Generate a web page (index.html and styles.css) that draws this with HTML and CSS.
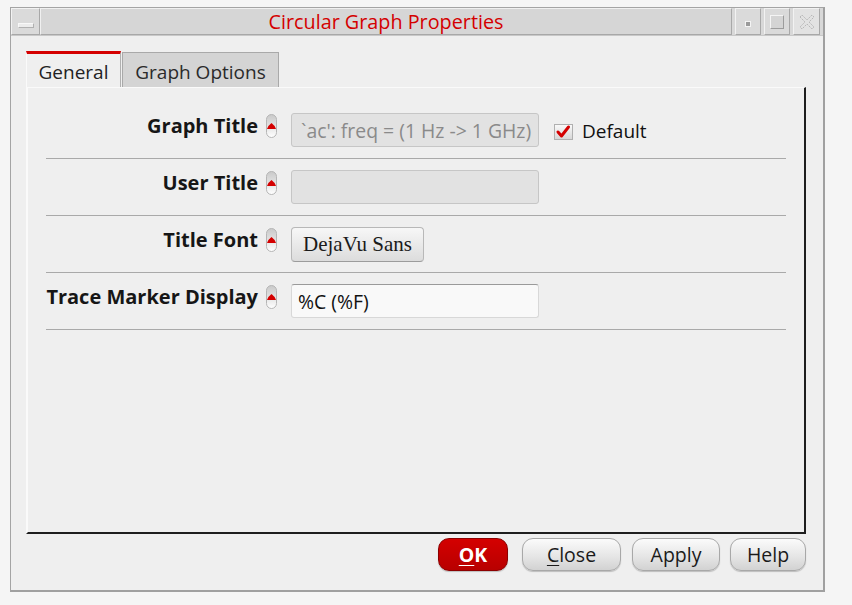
FILE: index.html
```html
<!DOCTYPE html>
<html>
<head>
<meta charset="utf-8">
<title>Circular Graph Properties</title>
<link rel="stylesheet" href="styles.css">
</head>
<body>
<div class="window">
  <div class="titlebar">
    <div class="tb-btn tb-menu"><span class="dash"></span></div>
    <div class="title">Circular Graph Properties</div>
    <div class="tb-btn tb-min"><span class="dot"></span></div>
    <div class="tb-btn tb-max"><span class="sq"></span></div>
    <div class="tb-btn tb-close">
      <svg width="18" height="18" viewBox="0 0 18 18"><path d="M2 4 L4 2 L9 7 L14 2 L16 4 L11 9 L16 14 L14 16 L9 11 L4 16 L2 14 L7 9 Z" fill="none" stroke="#b8b8b8" stroke-width="1" stroke-dasharray="2 1"/></svg>
    </div>
  </div>
  <div class="client">
    <div class="tabs">
      <div class="tab active">General</div>
      <div class="tab">Graph Options</div>
    </div>
    <div class="panel">
      <div class="row">
        <div class="label">Graph Title</div>
        <span class="pin"><svg width="11" height="24" viewBox="0 0 11 24"><defs><linearGradient id="pg1" x1="0" y1="0" x2="0" y2="1"><stop offset="0" stop-color="#c9c9c9"/><stop offset="0.5" stop-color="#e2e2e2"/><stop offset="1" stop-color="#ffffff"/></linearGradient></defs><rect x="0.5" y="0.5" width="10" height="23" rx="5" fill="url(#pg1)" stroke="#b5b5b5"/><path d="M1 15 Q1.5 12 5.5 9 Q9.5 12 10 15 Z" fill="#d40000"/></svg></span>
        <div class="field disabled">`ac': freq = (1 Hz -&gt; 1 GHz)</div>
        <span class="check"><svg width="19" height="16" viewBox="0 0 19 16"><defs><linearGradient id="cg" x1="0" y1="0" x2="0" y2="1"><stop offset="0" stop-color="#fafafa"/><stop offset="1" stop-color="#d6d6d6"/></linearGradient></defs><rect x="0.5" y="0.5" width="18" height="15" fill="url(#cg)" stroke="#b0b0b0"/><path d="M4 8 L7.5 12 L14.5 3" fill="none" stroke="#d40000" stroke-width="3" stroke-linecap="round" stroke-linejoin="round"/></svg></span>
        <span class="check-label">Default</span>
      </div>
      <div class="row">
        <div class="label">User Title</div>
        <span class="pin"><svg width="11" height="24" viewBox="0 0 11 24"><rect x="0.5" y="0.5" width="10" height="23" rx="5" fill="url(#pg1)" stroke="#b5b5b5"/><path d="M1 15 Q1.5 12 5.5 9 Q9.5 12 10 15 Z" fill="#d40000"/></svg></span>
        <div class="field disabled"></div>
      </div>
      <div class="row">
        <div class="label">Title Font</div>
        <span class="pin"><svg width="11" height="24" viewBox="0 0 11 24"><rect x="0.5" y="0.5" width="10" height="23" rx="5" fill="url(#pg1)" stroke="#b5b5b5"/><path d="M1 15 Q1.5 12 5.5 9 Q9.5 12 10 15 Z" fill="#d40000"/></svg></span>
        <div class="font-btn">DejaVu Sans</div>
      </div>
      <div class="row">
        <div class="label">Trace Marker Display</div>
        <span class="pin"><svg width="11" height="24" viewBox="0 0 11 24"><rect x="0.5" y="0.5" width="10" height="23" rx="5" fill="url(#pg1)" stroke="#b5b5b5"/><path d="M1 15 Q1.5 12 5.5 9 Q9.5 12 10 15 Z" fill="#d40000"/></svg></span>
        <div class="field editable">%C (%F)</div>
      </div>
    </div>
    <div class="buttons">
      <div class="btn ok"><u>O</u>K</div>
      <div class="btn close"><u>C</u>lose</div>
      <div class="btn apply">Apply</div>
      <div class="btn help">Help</div>
    </div>
  </div>
</div>
</body>
</html>
```

FILE: styles.css
```css
html, body {
  margin: 0;
  padding: 0;
  background: #f5f5f5;
  font-family: "Open Sans", "Noto Sans", sans-serif;
}

.window {
  box-sizing: border-box;
  margin: 7px 0 0 10px;
  width: 815px;
  height: 585px;
  border: 1px solid #a4a4a4;
  border-right: 2px solid #a0a0a0;
  border-bottom: 2px solid #a0a0a0;
  background: #eeeeee;
  display: flex;
  flex-direction: column;
}

.titlebar {
  height: 28px;
  display: flex;
  align-items: stretch;
  background: #d8d8d8;
  border-bottom: 1px solid #c8c8c8;
  box-sizing: border-box;
}

.tb-btn {
  box-sizing: border-box;
  width: 26px;
  border: 1px solid #f2f2f2;
  border-right-color: #a8a8a8;
  border-bottom-color: #a8a8a8;
  background: #dadada;
  display: flex;
  align-items: center;
  justify-content: center;
  margin-left: 3px;
}

.tb-menu {
  width: 29px;
  margin-left: 0;
  align-items: flex-end;
  padding-bottom: 6px;
}

.tb-close {
  width: 27px;
  margin-right: 3px;
  background: #e2e2e2;
}

.dash {
  width: 14px;
  height: 3px;
  background: #ececec;
  border: 1px solid #b0b0b0;
  border-top-color: #f8f8f8;
  border-left-color: #f8f8f8;
}

.dot {
  width: 4px;
  height: 4px;
  background: #9a9a9a;
  border: 1px solid #f4f4f4;
  margin-top: 4px;
}

.sq {
  width: 12px;
  height: 12px;
  border: 1px solid #f4f4f4;
  border-right-color: #9c9c9c;
  border-bottom-color: #9c9c9c;
  background: #d4d4d4;
}

.title {
  flex: 1;
  text-align: center;
  color: #d40000;
  font-size: 19.8px;
  line-height: 25px;
  background: #d6d6d6;
  border-top: 1px solid #f0f0f0;
  border-left: 1px solid #f0f0f0;
  border-right: 1px solid #a8a8a8;
  border-bottom: 1px solid #a8a8a8;
}

.client {
  padding: 15px 0 0 15px;
  display: flex;
  flex-direction: column;
  background: #efefef;
  flex: 1;
}

.tabs {
  display: flex;
  align-items: flex-end;
  height: 36px;
}

.tab {
  box-sizing: border-box;
  height: 35px;
  font-size: 19px;
  color: #222;
  display: flex;
  align-items: center;
  justify-content: center;
}

.tab.active {
  width: 95px;
  height: 36px;
  border-top: 3px solid #d40000;
  border-left: 1px solid #fafafa;
  border-right: 1px solid #b0b0b0;
  background: #efefef;
  padding-top: 2px;
}

.tab:not(.active) {
  width: 157px;
  margin-left: 1px;
  background: #d4d4d4;
  border: 1px solid #a9a9a9;
  border-bottom: none;
  color: #2a2a2a;
  padding-top: 4px;
}

.panel {
  box-sizing: border-box;
  width: 780px;
  height: 447px;
  background: #efefef;
  border-top: 1px solid #fafafa;
  border-left: 2px solid #fafafa;
  border-right: 2px solid #1e1e1e;
  border-bottom: 2px solid #1e1e1e;
  padding: 14px 18px 0 18px;
}

.row {
  display: flex;
  align-items: center;
  padding: 11px 0;
  border-bottom: 1px solid #a9a9a9;
  height: 34px;
  box-sizing: content-box;
}

.label {
  align-self: flex-start;
  width: 212px;
  text-align: right;
  font-weight: 700;
  font-size: 20px;
  line-height: 27px;
  margin-top: -1px;
  color: #161616;
  white-space: nowrap;
}

.pin {
  align-self: flex-start;
  display: flex;
  margin-left: 8px;
  margin-top: 1px;
  width: 11px;
  height: 24px;
}

.field {
  box-sizing: border-box;
  margin-left: 14px;
  width: 248px;
  height: 34px;
  border-radius: 3px;
  font-size: 19.4px;
  display: flex;
  align-items: center;
  padding-left: 9px;
  white-space: nowrap;
  overflow: hidden;
}

.field.disabled {
  background: #e2e2e2;
  border: 1px solid #c6c6c6;
  color: #8a8a8a;
}

.field.editable {
  background: #f9f9f9;
  border: 1px solid #d8d8d8;
  border-top-color: #9a9a9a;
  color: #111;
  padding-left: 6px;
}

.check {
  display: flex;
  margin-left: 15px;
  margin-top: 3px;
}

.check-label {
  margin-left: 9px;
  font-size: 19px;
  color: #111;
  margin-top: 2px;
}

.font-btn {
  box-sizing: border-box;
  margin-left: 14px;
  width: 133px;
  height: 35px;
  border-radius: 4px;
  border: 1px solid #b8b8b8;
  border-bottom-color: #9c9c9c;
  background: linear-gradient(#f7f7f7, #dcdcdc);
  font-family: "Liberation Serif", "Times New Roman", serif;
  font-size: 21px;
  color: #1a1a1a;
  display: flex;
  align-items: center;
  justify-content: center;
}

.buttons {
  width: 780px;
  display: flex;
  justify-content: flex-end;
  margin-top: 4px;
  gap: 11px;
}

.btn {
  box-sizing: border-box;
  height: 33px;
  border-radius: 11px;
  border: 1px solid #a8a8a8;
  background: linear-gradient(#fbfbfb, #e4e4e4 60%, #d2d2d2);
  font-size: 19.5px;
  color: #1a1a1a;
  display: flex;
  align-items: center;
  justify-content: center;
  box-shadow: 0 1px 1px #bdbdbd;
}

.btn u {
  text-underline-offset: 3px;
}

.btn.ok {
  width: 70px;
  margin-right: 3px;
  background: linear-gradient(#d40000, #b80000);
  border-color: #8c0000;
  color: #ffffff;
  font-weight: 700;
}

.btn.close { width: 99px; }
.btn.apply { width: 88px; }
.btn.help { width: 76px; margin-left: -1px; }
```
